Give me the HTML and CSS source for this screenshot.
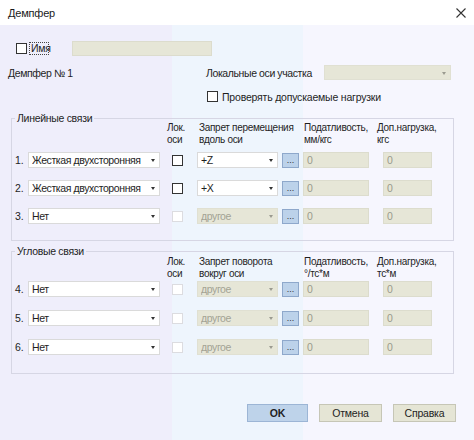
FILE: index.html
```html
<!DOCTYPE html>
<html lang="ru">
<head>
<meta charset="utf-8">
<title>Демпфер</title>
<link rel="stylesheet" href="styles.css">
</head>
<body>
<div class="window">
  <div class="titlebar">
    <span class="title">Демпфер</span>
    <svg class="close" width="10" height="10" viewBox="0 0 10 10"><path d="M0.5 0.5L9.5 9.5M9.5 0.5L0.5 9.5" stroke="#333" stroke-width="1.1" fill="none"/></svg>
  </div>
  <div class="main">
    <div class="name-row">
      <span class="chk"></span>
      <span class="focus-label">Имя</span>
      <span class="field field-name"></span>
    </div>
    <div class="axes-row">
      <span class="damper-label">Демпфер № 1</span>
      <span class="axes-label">Локальные оси участка</span>
      <span class="combo combo-off combo-axes"><span class="combo-text"></span><span class="arrow"></span></span>
    </div>
    <div class="check-row">
      <span class="chk"></span>
      <span class="check-label">Проверять допускаемые нагрузки</span>
    </div>

    <fieldset class="group group-linear">
      <legend>Линейные связи</legend>
      <div class="cols head">
        <span class="h-lok">Лок.<br>оси</span>
        <span class="h-zap">Запрет перемещения<br>вдоль оси</span>
        <span class="h-pod">Податливость,<br>мм/кгс</span>
        <span class="h-dop">Доп.нагрузка,<br>кгс</span>
      </div>
      <div class="cols line">
        <span class="num">1.</span>
        <span class="combo combo-type"><span class="combo-text">Жесткая двухсторонняя</span><span class="arrow"></span></span>
        <span class="chk chk-cell"></span>
        <span class="combo combo-axis"><span class="combo-text">+Z</span><span class="arrow"></span></span>
        <span class="dots">...</span>
        <span class="field field-pod">0</span>
        <span class="field field-dop">0</span>
      </div>
      <div class="cols line">
        <span class="num">2.</span>
        <span class="combo combo-type"><span class="combo-text">Жесткая двухсторонняя</span><span class="arrow"></span></span>
        <span class="chk chk-cell"></span>
        <span class="combo combo-axis"><span class="combo-text">+X</span><span class="arrow"></span></span>
        <span class="dots">...</span>
        <span class="field field-pod">0</span>
        <span class="field field-dop">0</span>
      </div>
      <div class="cols line">
        <span class="num">3.</span>
        <span class="combo combo-type"><span class="combo-text">Нет</span><span class="arrow"></span></span>
        <span class="chk chk-cell chk-off"></span>
        <span class="combo combo-axis combo-off"><span class="combo-text">другое</span><span class="arrow"></span></span>
        <span class="dots">...</span>
        <span class="field field-pod">0</span>
        <span class="field field-dop">0</span>
      </div>
    </fieldset>

    <fieldset class="group group-angular">
      <legend>Угловые связи</legend>
      <div class="cols head">
        <span class="h-lok">Лок.<br>оси</span>
        <span class="h-zap">Запрет поворота<br>вокруг оси</span>
        <span class="h-pod">Податливость,<br>°/тс*м</span>
        <span class="h-dop">Доп.нагрузка,<br>тс*м</span>
      </div>
      <div class="cols line">
        <span class="num">4.</span>
        <span class="combo combo-type"><span class="combo-text">Нет</span><span class="arrow"></span></span>
        <span class="chk chk-cell chk-off"></span>
        <span class="combo combo-axis combo-off"><span class="combo-text">другое</span><span class="arrow"></span></span>
        <span class="dots">...</span>
        <span class="field field-pod">0</span>
        <span class="field field-dop">0</span>
      </div>
      <div class="cols line">
        <span class="num">5.</span>
        <span class="combo combo-type"><span class="combo-text">Нет</span><span class="arrow"></span></span>
        <span class="chk chk-cell chk-off"></span>
        <span class="combo combo-axis combo-off"><span class="combo-text">другое</span><span class="arrow"></span></span>
        <span class="dots">...</span>
        <span class="field field-pod">0</span>
        <span class="field field-dop">0</span>
      </div>
      <div class="cols line">
        <span class="num">6.</span>
        <span class="combo combo-type"><span class="combo-text">Нет</span><span class="arrow"></span></span>
        <span class="chk chk-cell chk-off"></span>
        <span class="combo combo-axis combo-off"><span class="combo-text">другое</span><span class="arrow"></span></span>
        <span class="dots">...</span>
        <span class="field field-pod">0</span>
        <span class="field field-dop">0</span>
      </div>
    </fieldset>

    <div class="buttons">
      <span class="btn btn-ok">OK</span>
      <span class="btn btn-cancel">Отмена</span>
      <span class="btn btn-help">Справка</span>
    </div>
  </div>
</div>
</body>
</html>
```

FILE: styles.css
```css
* { box-sizing: border-box; }

body {
  margin: 0;
  width: 474px;
  height: 440px;
  overflow: hidden;
  font-family: "Liberation Sans", Arial, sans-serif;
  font-size: 10.5px;
  letter-spacing: -0.2px;
  color: #1e1e1e;
}

.window {
  height: 440px;
  display: flex;
  flex-direction: column;
}

.titlebar {
  height: 25px;
  flex: none;
  background: #ffffff;
  display: flex;
  align-items: center;
  justify-content: space-between;
  padding: 0 7px 0 8px;
}

.title {
  font-size: 11px;
  color: #1a1a1a;
}

.close { display: block; margin-right: 1px; }

.main {
  flex: 1;
  background: linear-gradient(to right, #efeefb 0, #efeefb 172px, #eef5fd 172px, #eef5fd 303px, #f6f6fe 303px);
}

/* top rows */
.name-row {
  margin-top: 16px;
  height: 15px;
  display: flex;
  align-items: center;
}

.chk {
  display: block;
  flex: none;
  width: 11px;
  height: 11px;
  background: #ffffff;
  border: 1px solid #333333;
}

.chk-off { border-color: #dcdce0; }

.name-row .chk { margin-left: 16px; }

.focus-label {
  margin-left: 2px;
  width: 20px;
  height: 13px;
  line-height: 11px;
  padding-left: 1px;
  border: 1px dotted #444;
}

.field {
  display: block;
  flex: none;
  height: 16px;
  background: #e6e6d7;
  border: 1px solid #dcdccd;
  color: #9a9a8c;
  line-height: 14px;
  padding-left: 3px;
}

.field-name {
  margin-left: 23px;
  width: 140px;
  height: 15px;
}

.axes-row {
  margin-top: 9px;
  height: 15px;
  display: flex;
  align-items: center;
}

.damper-label {
  width: 206px;
  padding-left: 8px;
  flex: none;
  letter-spacing: -0.4px;
}

.axes-label {
  width: 118px;
  flex: none;
  letter-spacing: -0.4px;
}

.combo {
  display: flex;
  align-items: center;
  height: 16px;
  background: #ffffff;
  border: 1px solid #dadada;
  padding: 0 4px 0 3px;
}

.combo-text {
  flex: 1;
  white-space: nowrap;
  overflow: hidden;
  letter-spacing: -0.4px;
}

.arrow {
  width: 0;
  height: 0;
  border-left: 2.5px solid transparent;
  border-right: 2.5px solid transparent;
  border-top: 3px solid #333333;
  margin-top: 1px;
}

.combo-off {
  background: #e6e6d7;
  border-color: #e0e0d2;
  color: #a3a394;
}

.combo-off .arrow { border-top-color: #9a9a90; }

.combo-axes {
  width: 127px;
  height: 15px;
}

.check-row {
  margin-top: 11px;
  height: 11px;
  display: flex;
  align-items: center;
}

.check-row .chk { margin-left: 207px; }

.check-label { margin-left: 4px; white-space: nowrap; }

/* groups */
.group {
  margin: 10px 0 0 11px;
  width: 443px;
  border: 1px solid #d6d6e4;
  padding: 0 0 16px 0;
  min-width: 0;
}

.group legend {
  margin-left: 3px;
  padding: 0 2px;
  line-height: 12px;
  height: 12px;
  letter-spacing: -0.3px;
}

.group-angular {
  margin-top: 4px;
  padding-bottom: 18px;
}

.cols {
  display: grid;
  grid-template-columns: 16px 132px 37px 81px 25px 80px 49px;
  align-items: center;
}

.head {
  font-size: 10px;
  line-height: 12px;
  margin-top: -2px;
  white-space: nowrap;
  letter-spacing: -0.3px;
}

.group-angular .head { margin-top: -1px; }

.h-lok { grid-column: 3; margin-left: 7px; }
.h-zap { grid-column: 4 / span 2; margin-left: 2px; }
.h-pod { grid-column: 6; margin-left: 1px; }
.h-dop { grid-column: 7; margin-left: -6px; }

.line {
  height: 16px;
  margin-top: 12px;
}

.head + .line { margin-top: 6px; }

.group-angular .line { margin-top: 13px; }
.group-angular .head + .line { margin-top: 1px; }

.num { margin-left: 3px; }

.chk-cell { margin-left: 12px; }

.dots {
  display: block;
  margin-left: 4px;
  width: 17px;
  height: 15px;
  background: #bcd2ea;
  border: 1px solid #8ea8cb;
  text-align: center;
  line-height: 12px;
  font-size: 9px;
  letter-spacing: 0;
  color: #333;
}

.field-pod { width: 66px; }
.field-dop { width: 49px; }

.field-pod, .field-dop { padding-left: 3px; }

/* buttons */
.buttons {
  margin-top: 30px;
  display: flex;
  height: 18px;
}

.btn {
  display: block;
  height: 18px;
  line-height: 16px;
  text-align: center;
  border: 1px solid #c6c6b6;
  background: #e5e5d5;
}

.btn-ok {
  margin-left: 247px;
  width: 61px;
  background: #bed3ea;
  border-color: #9cb5d5;
  font-weight: bold;
}

.btn-cancel { margin-left: 11px; width: 63px; }
.btn-help { margin-left: 11px; width: 63px; }
```
